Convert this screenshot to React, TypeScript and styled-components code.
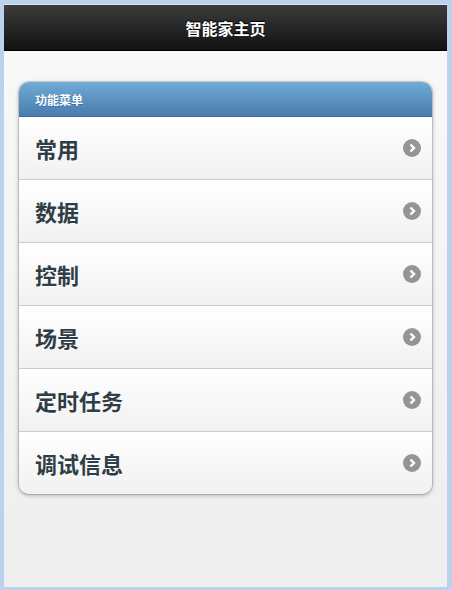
import React from "react";
import styled, { createGlobalStyle } from "styled-components";

const GlobalStyle = createGlobalStyle`
  html, body {
    margin: 0;
    padding: 0;
    background: #bcd2ec;
  }
  body {
    font-family: "Noto Sans CJK SC", "Noto Sans", "Liberation Sans", sans-serif;
  }
`;

const Screen = styled.div`
  width: 452px;
  height: 590px;
  box-sizing: border-box;
  padding: 4px 5px 3px 4px;
  background: #bcd2ec;
`;

const TopStrip = styled.div`
  height: 1px;
  background: #d6e4f4;
`;

const Page = styled.div`
  height: 582px;
  display: flex;
  flex-direction: column;
  background: linear-gradient(#f9f9f9, #eeeeee);
`;

const Header = styled.header`
  height: 45px;
  flex-shrink: 0;
  display: flex;
  align-items: center;
  justify-content: center;
  background: linear-gradient(#3c3c3c, #111111);
  border-bottom: 1px solid #000;
  color: #fff;
  font-size: 16px;
  font-weight: 700;
  text-shadow: 0 -1px 1px #000;
`;

const Content = styled.main`
  padding: 31px 15px 0 15px;
`;

const Card = styled.section`
  border-radius: 10px;
  box-shadow: 0 1px 4px rgba(0, 0, 0, 0.35), 0 0 0 1px rgba(0, 0, 0, 0.1);
  overflow: hidden;
`;

const CardHeader = styled.div`
  height: 34px;
  display: flex;
  align-items: center;
  padding-left: 16px;
  background: linear-gradient(#6facd5, #497bae);
  border-bottom: 1px solid #456f9a;
  color: #fff;
  font-size: 12px;
  font-weight: 700;
  text-shadow: 0 1px 0 #3373a5;
`;

const List = styled.ul`
  list-style: none;
  margin: 0;
  padding: 0;
`;

const Row = styled.li<{ $last?: boolean }>`
  height: 62px;
  display: flex;
  align-items: center;
  justify-content: space-between;
  padding: 0 11px 0 16px;
  background: linear-gradient(#ffffff, #f1f1f1);
  border-bottom: ${(p) => (p.$last ? "none" : "1px solid #cccccc")};
  color: #2f3e46;
  font-size: 22px;
  font-weight: 700;
  text-shadow: 0 1px 0 #fff;
  cursor: pointer;
`;

const Label = styled.span`
  margin-top: -1px;
`;

const Arrow = styled.span`
  width: 18px;
  height: 18px;
  border-radius: 50%;
  background: rgba(0, 0, 0, 0.4);
  display: flex;
  align-items: center;
  justify-content: center;
`;

const items = ["常用", "数据", "控制", "场景", "定时任务", "调试信息"];

const App: React.FC = () => {
  return (
    <>
      <GlobalStyle />
      <Screen>
        <TopStrip />
        <Page>
          <Header>智能家主页</Header>
          <Content>
            <Card>
              <CardHeader>功能菜单</CardHeader>
              <List>
                {items.map((item, i) => (
                  <Row key={item} $last={i === items.length - 1}>
                    <Label>{item}</Label>
                    <Arrow>
                      <svg width="10" height="10" viewBox="0 0 10 10">
                        <path
                          d="M3.5 1.5 L7 5 L3.5 8.5"
                          fill="none"
                          stroke="#fff"
                          strokeWidth="2.4"
                        />
                      </svg>
                    </Arrow>
                  </Row>
                ))}
              </List>
            </Card>
          </Content>
        </Page>
      </Screen>
    </>
  );
};

export default App;
